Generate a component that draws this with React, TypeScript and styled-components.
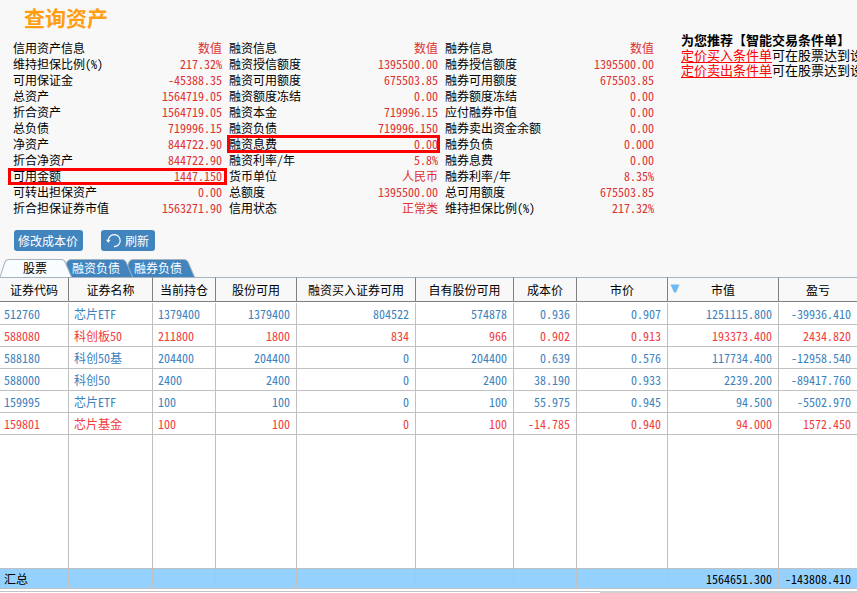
import React, { useState } from 'react';
import styled, { createGlobalStyle } from 'styled-components';

const GlobalStyle = createGlobalStyle`
  * { box-sizing: border-box; }
  body { margin: 0; background: #f8f8f8; }
  body, button, table {
    font-family: "Noto Sans CJK SC", sans-serif;
    font-size: 12px;
    line-height: 16px;
    font-feature-settings: "hwid";
    color: #000;
  }
`;

const Page = styled.main`
  display: flex;
  flex-direction: column;
  height: 100vh;
  min-height: 480px;
  overflow: hidden;
`;

const Title = styled.h1`
  margin: 0;
  padding: 5px 0 7px 24px;
  font-size: 21px;
  line-height: 24px;
  font-weight: 700;
  color: #ff9f10;
`;

const Overview = styled.section`
  display: grid;
  grid-template-columns: repeat(3, minmax(150px, 209px)) minmax(0, 1fr);
  column-gap: 7px;
  padding: 4px 0 0 13px;
`;

const InfoList = styled.dl`
  margin: 0;
`;

const InfoRow = styled.div`
  position: relative;
  display: flex;
  justify-content: space-between;
  white-space: nowrap;
  dt { margin: 0; }
  dd { margin: 0; color: #dc3232; }
`;

const Highlight = styled.span<{ $wide?: boolean }>`
  position: absolute;
  inset: ${(p) => (p.$wide ? '0 -5px -1px' : '-1px -2px')};
  border: 3px solid #f00;
  pointer-events: none;
`;

const Promo = styled.aside`
  align-self: start;
  margin: -8px 0 0 20px;
  padding-bottom: 4px;
  overflow: hidden;
  white-space: nowrap;
  font-size: 13px;
  line-height: 15px;
  h2 { margin: 0; font-size: 13px; line-height: 15px; font-weight: 700; }
  p { margin: 0; }
  a { color: #f00; text-underline-offset: 2px; }
`;

const Toolbar = styled.div`
  display: flex;
  gap: 18px;
  padding: 14px 14px 8px;
`;

const ActionButton = styled.button<{ $icon?: boolean }>`
  display: flex;
  align-items: center;
  gap: 4px;
  height: 21px;
  padding: ${(p) => (p.$icon ? '0 6px 0 5px' : '0 5px 0 4px')};
  border: 0;
  border-radius: 3px;
  background: #4285be;
  color: #fff;
`;

const Tabs = styled.div`
  display: flex;
  height: 18px;
`;

const Tab = styled.button<{ $active: boolean; $order: number }>`
  position: relative;
  z-index: ${(p) => p.$order};
  height: 18px;
  padding: ${(p) => (p.$order === 3 ? '0 25px 0 23px' : '0 13px 0 10px')};
  margin-left: ${(p) => (p.$order === 3 ? '0' : p.$order === 2 ? '-10px' : '-9px')};
  border: 0;
  background: none;
  color: ${(p) => (p.$active ? '#000' : '#fff')};
  span { position: relative; }
`;

const TabShape = styled.svg`
  position: absolute;
  inset: 0;
  width: 100%;
  height: 100%;
`;

const TableArea = styled.div`
  flex: 1 1 0;
  min-height: 0;
  background: #fff;
`;

const Table = styled.table`
  width: 100%;
  height: 100%;
  table-layout: fixed;
  border-collapse: separate;
  border-spacing: 0;
`;

const HeadCell = styled.th`
  position: relative;
  height: 25px;
  padding: 0;
  border: solid #808080;
  border-width: 1px 1px 1px 0;
  border-top-color: #a5b4c0;
  background: #f8f8f8;
  font-weight: 400;
  white-space: nowrap;
  &:last-child { border-right: 0; }
`;

const SortMark = styled.svg`
  position: absolute;
  left: 2px;
  top: 6px;
`;

type Tone = 'blue' | 'red';

const Row = styled.tr<{ $tone: Tone }>`
  color: ${(p) => (p.$tone === 'blue' ? '#3c82be' : '#f03c3c')};
`;

const Cell = styled.td<{ $left?: boolean; $first?: boolean }>`
  height: 22px;
  padding: 0 6px 0 ${(p) => (p.$first ? '4px' : '5px')};
  border: solid #c0c0c0;
  border-width: 0 1px 1px 0;
  text-align: ${(p) => (p.$left ? 'left' : 'right')};
  white-space: nowrap;
  &:last-child { border-right: 0; }
`;

const Spacer = styled.td`
  padding: 0;
  border: solid #c0c0c0;
  border-width: 0 1px 1px 0;
  &:last-child { border-right: 0; }
`;

const Gap = styled.td`
  height: 1px;
  padding: 0;
`;

const TotalCell = styled(Cell)`
  height: 20px;
  background: #94d1ff;
`;

const ScrollStrip = styled.div`
  display: flex;
  flex: none;
  height: 4px;
  padding-top: 2px;
  background: #fff;
`;

const ScrollThumb = styled.div`
  flex: 0 0 70%;
  border-top: 1px solid #c0c4c8;
`;

const ScrollTrack = styled.div`
  flex: 1;
  background: #d0d0d0;
`;

const info: [string, string, ('wide' | 'narrow')?][][] = [
  [
    ['信用资产信息', '数值'],
    ['维持担保比例(%)', '217.32%'],
    ['可用保证金', '-45388.35'],
    ['总资产', '1564719.05'],
    ['折合资产', '1564719.05'],
    ['总负债', '719996.15'],
    ['净资产', '844722.90'],
    ['折合净资产', '844722.90'],
    ['可用金额', '1447.150', 'wide'],
    ['可转出担保资产', '0.00'],
    ['折合担保证券市值', '1563271.90'],
  ],
  [
    ['融资信息', '数值'],
    ['融资授信额度', '1395500.00'],
    ['融资可用额度', '675503.85'],
    ['融资额度冻结', '0.00'],
    ['融资本金', '719996.15'],
    ['融资负债', '719996.150'],
    ['融资息费', '0.00', 'narrow'],
    ['融资利率/年', '5.8%'],
    ['货币单位', '人民币'],
    ['总额度', '1395500.00'],
    ['信用状态', '正常类'],
  ],
  [
    ['融券信息', '数值'],
    ['融券授信额度', '1395500.00'],
    ['融券可用额度', '675503.85'],
    ['融券额度冻结', '0.00'],
    ['应付融券市值', '0.00'],
    ['融券卖出资金余额', '0.00'],
    ['融券负债', '0.000'],
    ['融券息费', '0.00'],
    ['融券利率/年', '8.35%'],
    ['总可用额度', '675503.85'],
    ['维持担保比例(%)', '217.32%'],
  ],
];

const columns: [string, number][] = [
  ['证券代码', 69],
  ['证券名称', 84],
  ['当前持仓', 63],
  ['股份可用', 81],
  ['融资买入证券可用', 119],
  ['自有股份可用', 98],
  ['成本价', 63],
  ['市价', 91],
  ['市值', 111],
  ['盈亏', 78],
];

const holdings: { tone: Tone; values: string[] }[] = [
  { tone: 'blue', values: ['512760', '芯片ETF', '1379400', '1379400', '804522', '574878', '0.936', '0.907', '1251115.800', '-39936.410'] },
  { tone: 'red', values: ['588080', '科创板50', '211800', '1800', '834', '966', '0.902', '0.913', '193373.400', '2434.820'] },
  { tone: 'blue', values: ['588180', '科创50基', '204400', '204400', '0', '204400', '0.639', '0.576', '117734.400', '-12958.540'] },
  { tone: 'blue', values: ['588000', '科创50', '2400', '2400', '0', '2400', '38.190', '0.933', '2239.200', '-89417.760'] },
  { tone: 'blue', values: ['159995', '芯片ETF', '100', '100', '0', '100', '55.975', '0.945', '94.500', '-5502.970'] },
  { tone: 'red', values: ['159801', '芯片基金', '100', '100', '0', '100', '-14.785', '0.940', '94.000', '1572.450'] },
];

const totals = ['汇总', '', '', '', '', '', '', '', '1564651.300', '-143808.410'];

const tabs = ['股票', '融资负债', '融券负债'];

export default function App() {
  const [active, setActive] = useState(0);
  return (
    <Page>
      <GlobalStyle />
      <Title>查询资产</Title>
      <Overview>
        {info.map((list, i) => (
          <InfoList key={i}>
            {list.map(([label, value, mark]) => (
              <InfoRow key={label}>
                <dt>{label}</dt>
                <dd>
                  {value}
                  {mark && <Highlight $wide={mark === 'wide'} />}
                </dd>
              </InfoRow>
            ))}
          </InfoList>
        ))}
        <Promo>
          <h2>为您推荐【智能交易条件单】</h2>
          <p><a href="#buy">定价买入条件单</a>可在股票达到设</p>
          <p><a href="#sell">定价卖出条件单</a>可在股票达到设</p>
        </Promo>
      </Overview>

      <Toolbar>
        <ActionButton type="button">修改成本价</ActionButton>
        <ActionButton type="button" $icon>
          <svg width="15" height="15" viewBox="0 0 15 15" fill="none" aria-hidden="true">
            <path d="M2.2 9 V7.6 A6 6 0 1 1 8 13.6" stroke="#fff" strokeWidth="1.2" />
            <path d="M0 6.8 H4.6 L2.3 9.8 Z" fill="#fff" />
          </svg>
          刷新
        </ActionButton>
      </Toolbar>

      <Tabs role="tablist">
        {tabs.map((name, i) => (
          <Tab
            key={name}
            type="button"
            role="tab"
            aria-selected={active === i}
            $active={active === i}
            $order={3 - i}
            onClick={() => setActive(i)}
          >
            <TabShape viewBox="0 0 72 18" preserveAspectRatio="none" aria-hidden="true">
              <path
                d="M0 18 L5 3 Q6 0.5 9 0.5 H61 Q64 0.5 65 3 L71.5 18"
                fill={active === i ? '#f8feff' : '#4285be'}
                stroke="#a5b4c0"
              />
            </TabShape>
            <span>{name}</span>
          </Tab>
        ))}
      </Tabs>

      <TableArea>
        <Table>
          <colgroup>
            {columns.map(([name, width]) => (
              <col key={name} width={width} />
            ))}
          </colgroup>
          <thead>
            <tr>
              {columns.map(([name]) => (
                <HeadCell key={name} scope="col" aria-sort={name === '市值' ? 'descending' : undefined}>
                  {name === '市值' && (
                    <SortMark width="10" height="9" viewBox="0 0 10 9" aria-hidden="true">
                      <path d="M0.5 0.5 H9.5 L6 8.5 H4 Z" fill="#70b8f0" />
                    </SortMark>
                  )}
                  {name}
                </HeadCell>
              ))}
            </tr>
          </thead>
          <tbody>
            <tr aria-hidden="true"><Gap colSpan={columns.length} /></tr>
            {holdings.map(({ tone, values }) => (
              <Row key={values[0]} $tone={tone}>
                {values.map((value, i) => (
                  <Cell key={i} $left={i < 3} $first={i === 0}>{value}</Cell>
                ))}
              </Row>
            ))}
            <tr aria-hidden="true">
              {columns.map(([name]) => (
                <Spacer key={name} />
              ))}
            </tr>
          </tbody>
          <tfoot>
            <tr>
              {totals.map((value, i) => (
                <TotalCell key={i} $left={i === 0} $first={i === 0}>{value}</TotalCell>
              ))}
            </tr>
          </tfoot>
        </Table>
      </TableArea>
      <ScrollStrip>
        <ScrollThumb />
        <ScrollTrack />
      </ScrollStrip>
    </Page>
  );
}
